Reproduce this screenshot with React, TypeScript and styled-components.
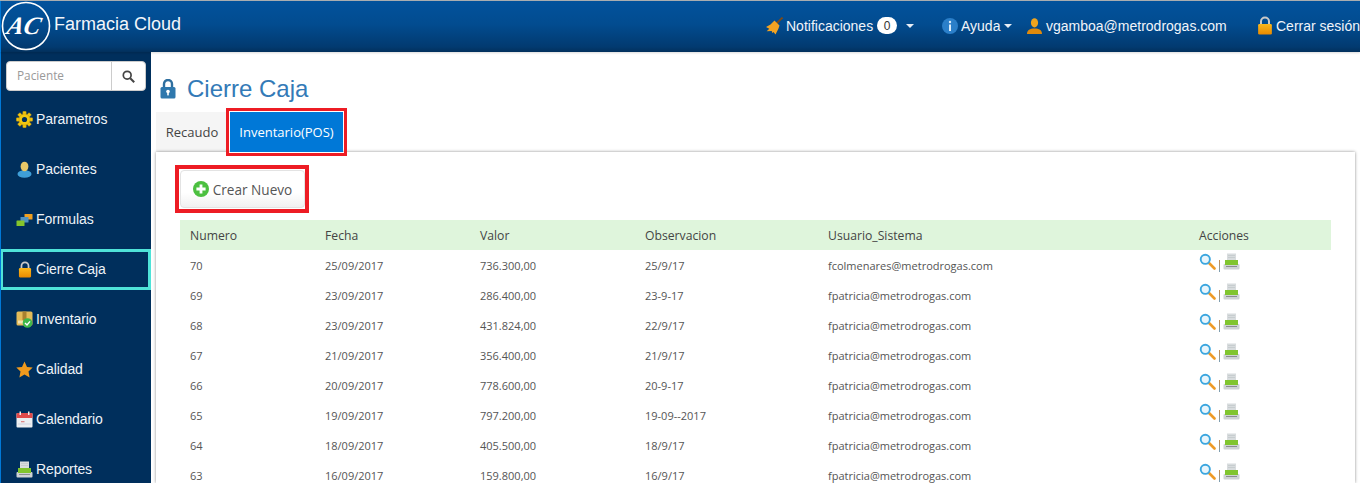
import React from "react";
import styled, { createGlobalStyle } from "styled-components";

const Global = createGlobalStyle`
  html, body { margin: 0; padding: 0; height: 483px; overflow: hidden; background: #fff; }
  body { font-family: "Liberation Sans", Arial, sans-serif; }
  * { box-sizing: border-box; }
`;

const Page = styled.div`
  width: 1360px; height: 483px; display: flex; flex-direction: column; overflow: hidden;
  border-top: 1px solid #a9adb0; 
`;
const Header = styled.header`
  height: 51px; flex: none; display: flex; align-items: center; justify-content: space-between;
  background: linear-gradient(180deg, #02529c 0%, #024c90 45%, #023a70 90%, #02305c 100%);
  box-shadow: 0 1px 2px rgba(0,0,0,.15); position: relative; z-index: 2; color: #fff;
  border-left: 1px solid #0078d7;
`;
const Brand = styled.div`
  display: flex; align-items: center; gap: 3px; padding: 0 0 0 0; height: 100%;
  font-size: 18px; margin-top: -2px;
`;
const BrandName = styled.span`position: relative; top: -1px; color: #f2f6fb;`;
const LogoText = styled.text`
  font-family: "Liberation Serif", serif; font-style: italic; font-weight: 700; font-size: 25px; fill: #fff;
`;
const NavMenu = styled.nav`display: flex; align-items: center; height: 100%; font-size: 14px; color: #f0f4fa; padding-bottom: 2px; margin-right: -2px;`;
const NavItem = styled.div<{ $w: number }>`
  display: flex; align-items: center; gap: 3px; width: ${p => p.$w}px; white-space: nowrap; flex: none;
`;
const Badge = styled.span`
  display: inline-flex; align-items: center; justify-content: center; width: 20px; height: 17px; border-radius: 9px;
  background: #fff; color: #333; font-size: 12px; margin: 0 5px 0 1px;
`;
const Caret = styled.span`
  display: inline-block; width: 0; height: 0; border-left: 4px solid transparent; border-right: 4px solid transparent;
  border-top: 4px solid #e8eef5; margin-left: 1px;
`;

const Body = styled.div`flex: 1; display: flex; min-height: 0;`;
const Sidebar = styled.aside`
  width: 151px; flex: none; background: #002f5c; border-left: 1px solid #0078d7; padding-top: 9px;
  display: flex; flex-direction: column; overflow: hidden;
`;
const SearchBox = styled.div`
  margin: 0 5px 0 5px; height: 30px; display: flex; background: #fff; border: 1px solid #ccc; border-radius: 4px; flex: none;
`;
const SearchLabel = styled.div`
  flex: 1; padding: 0 0 2px 10px; font-size: 11.8px; color: #999; display: flex; align-items: center;
  font-family: "Open Sans", sans-serif; border-right: 1px solid #ccc;
`;
const SearchBtn = styled.div`width: 33px; display: flex; align-items: center; justify-content: center; color: #444;`;
const SideList = styled.div`display: flex; flex-direction: column; margin-top: 3px; flex: none;`;
const SideItem = styled.div<{ $active?: boolean }>`
  height: 50px; flex: none; display: flex; align-items: center; gap: 3px; padding-left: 15px; font-size: 14px; color: #eef3f8;
  letter-spacing: -0.1px; position: relative;
  ${p => p.$active ? `&::after { content: ""; position: absolute; left: -1px; right: 0; top: 5px; bottom: 4px; border: 3px solid #4fe3d8; }` : ""}
`;
const IconSlot = styled.span`width: 17px; height: 17px; display: inline-flex; align-items: center; justify-content: center; flex: none;`;

const Main = styled.main`flex: 1; min-width: 0; padding: 0 5px 0 5px; display: flex; flex-direction: column; overflow: hidden;`;
const Title = styled.div`
  height: 60px; flex: none; display: flex; align-items: center; gap: 11px; padding: 13px 0 0 4px;
  font-size: 24px; color: #337ab7;
`;
const Tabs = styled.div`display: flex; height: 40px; flex: none; font-family: "Open Sans", sans-serif; font-size: 13px;`;
const Tab = styled.div<{ $active?: boolean }>`
  display: flex; align-items: center; justify-content: center; height: 40px; color: ${p => p.$active ? "#fff" : "#444"};
  background: ${p => p.$active ? "#0078d7" : "#f5f5f5"}; width: ${p => p.$active ? "113px" : "70px"};
  margin-left: ${p => p.$active ? "4px" : "0"}; padding-left: ${p => p.$active ? "0" : "2px"};
  ${p => p.$active ? "outline: 3px solid #ed1c24; outline-offset: 1px; position: relative; z-index: 1;" : ""}
`;
const Panel = styled.section`
  flex: 1; background: #fff; box-shadow: 0 0 3px rgba(0,0,0,.45); padding: 13px 24px 0 24px; min-height: 0;
`;
const ButtonFrame = styled.div`
  width: 134px; height: 48px; margin-left: -5px; border: 4px solid #ed1c24; padding: 1px 0 0 1px;
`;
const CreateButton = styled.div`
  width: 125px; height: 38px; display: flex; align-items: center; justify-content: center; gap: 4px;
  border: 1px solid #e3e3e3; border-radius: 4px; background: linear-gradient(#fff 60%, #f1f1f1);
  font-family: "Open Sans", sans-serif; font-size: 13.6px; color: #555;
`;
const Table = styled.table`
  width: 1151px; margin-top: 7px; border-collapse: collapse; table-layout: fixed;
  font-family: "Open Sans", sans-serif; font-size: 11px; color: #555;
`;
const HeadRow = styled.tr`background: #dff5dc; height: 30px;`;
const Th = styled.th<{ $w: number }>`
  width: ${p => p.$w}px; font-weight: 400; font-size: 12.2px; text-align: left; padding: 0 0 0 10px; color: #444;
`;
const Row = styled.tr`height: 30px;`;
const Td = styled.td`padding: 1px 0 0 10px; white-space: nowrap;`;
const Actions = styled.div`display: flex; align-items: flex-start; gap: 1px; height: 22px; margin-top: -4px;`;
const Sep = styled.span`width: 1px; height: 12px; background: linear-gradient(#c98b4a, #7aa0b8); margin: 7px 2px 0 2px;`;

const Gear = () => (
  <svg width="17" height="17" viewBox="0 0 17 17">
    <g fill="#f2c811" stroke="#b8890a" strokeWidth=".4">
      {[0, 45, 90, 135, 180, 225, 270, 315].map(a => <rect key={a} x="6.8" y="0.3" width="3.4" height="4" rx=".6" transform={`rotate(${a} 8.5 8.5)`} />)}
      <circle cx="8.5" cy="8.5" r="5.6" />
    </g>
    <circle cx="8.5" cy="8.5" r="2.6" fill="#002f5c" />
  </svg>
);
const Person = () => (
  <svg width="17" height="17" viewBox="0 0 17 17">
    <ellipse cx="8.5" cy="13" rx="7" ry="3.8" fill="#3f9fd8" />
    <ellipse cx="8.5" cy="5.5" rx="3.9" ry="4.8" fill="#e8c868" />
  </svg>
);
const Forms = () => (
  <svg width="17" height="17" viewBox="0 0 17 17">
    <rect x="8.5" y="3" width="8" height="5.6" rx=".6" fill="#f0a020" />
    <rect x="4.5" y="6" width="8" height="5.6" rx=".6" fill="#4f93c4" />
    <rect x="0.5" y="9.5" width="8" height="5.6" rx=".6" fill="#84c52c" />
  </svg>
);
const Lock = ({ c1 = "#fbb81c", c2 = "#e98a00", shackle = "#c9c9c9", w = 15, h = 18 }: { c1?: string; c2?: string; shackle?: string; w?: number; h?: number }) => (
  <svg width={w} height={h} viewBox="0 0 15 18">
    <defs><linearGradient id={`l${c1.slice(1)}`} x1="0" y1="0" x2="0" y2="1"><stop offset="0" stopColor={c1} /><stop offset="1" stopColor={c2} /></linearGradient></defs>
    <path d="M3.7 8V5.2a3.8 3.8 0 0 1 7.6 0V8" fill="none" stroke={shackle} strokeWidth="1.9" />
    <rect x="1" y="7.5" width="13" height="10" rx="1.2" fill={`url(#l${c1.slice(1)})`} />
  </svg>
);
const BlueLock = () => (
  <svg width="16" height="20" viewBox="0 0 16 20">
    <path d="M4 9V5a4 4 0 0 1 8 0V9" fill="none" stroke="#2f6f9f" strokeWidth="2.4" />
    <rect x="0.5" y="8" width="15" height="11.5" rx="1.5" fill="#2f78ad" />
    <circle cx="8" cy="12.5" r="1.8" fill="#fff" />
    <rect x="7.2" y="13" width="1.6" height="3.4" fill="#fff" />
  </svg>
);
const Box = () => (
  <svg width="17" height="17" viewBox="0 0 17 17">
    <rect x="0.5" y="0.5" width="16" height="14" rx="1.5" fill="#e3bb58" />
    <rect x="6.5" y="0.5" width="4" height="9" fill="#a9812f" />
    <rect x="2" y="9.5" width="5" height="3" fill="#f3e2b0" />
    <circle cx="11.5" cy="12" r="4.8" fill="#3fb84a" />
    <path d="M9 12l2 2 3-3.6" fill="none" stroke="#fff" strokeWidth="1.4" />
  </svg>
);
const Star = () => (
  <svg width="17" height="17" viewBox="0 0 17 17">
    <path d="M8.5.6l2.5 5.3 5.7.7-4.2 4 1.1 5.8-5.1-2.9-5.1 2.9 1.1-5.8-4.2-4 5.7-.7z" fill="#f09a1d" />
  </svg>
);
const Calendar = () => (
  <svg width="17" height="17" viewBox="0 0 17 17">
    <rect x="0.5" y="2" width="16" height="14.5" rx="1" fill="#eceff1" />
    <path d="M.5 3a1 1 0 0 1 1-1h14a1 1 0 0 1 1 1v4h-16z" fill="#e04a4a" />
    <rect x="3.5" y="0.5" width="1.5" height="3.5" fill="#eee" />
    <rect x="12" y="0.5" width="1.5" height="3.5" fill="#eee" />
    <rect x="5" y="10" width="3.5" height="1.3" fill="#d88" />
    <path d="M2 13h13" stroke="#ccd" strokeWidth=".8" />
  </svg>
);
const Printer = () => (
  <svg width="17" height="17" viewBox="0 0 17 17">
    <rect x="4" y="0.5" width="9" height="7" fill="#d8dcde" />
    <path d="M5 2.5h7M5 4.5h7" stroke="#c0c5c8" strokeWidth=".7" />
    <rect x="0.5" y="11" width="16" height="5.5" rx="1" fill="#ced2d4" />
    <rect x="2" y="7" width="13" height="5" fill="#80c52e" />
    <rect x="3" y="13" width="11" height="1" fill="#8a8e90" />
  </svg>
);
const Magnifier = () => (
  <svg width="17" height="17" viewBox="0 0 17 17">
    <path d="M9.5 9.5l6 6" stroke="#ee9a26" strokeWidth="2.6" strokeLinecap="round" />
    <circle cx="6.3" cy="6.3" r="4.6" fill="#e8f5fc" stroke="#3ba6df" strokeWidth="1.9" />
  </svg>
);
const Plus = () => (
  <svg width="16" height="16" viewBox="0 0 16 16">
    <circle cx="8" cy="8" r="8" fill="#4cc040" />
    <path d="M8 3.4v9.2M3.4 8h9.2" stroke="#fff" strokeWidth="2.8" />
  </svg>
);
const Broom = () => (
  <svg width="17" height="18" viewBox="0 0 17 18">
    <path d="M16.5 0.5L10.5 6.5" stroke="#7a4a1a" strokeWidth="1.8" />
    <path d="M8.5 3.5l5 5-1 3-3 6-2-2.5-1.2 1-.6-2-5 .2 2.6-2.4L0 10l4.5-2.5z" fill="#f2a322" />
  </svg>
);
const Info = () => (
  <svg width="16" height="16" viewBox="0 0 16 16">
    <circle cx="8" cy="8" r="8" fill="#2b7fc9" />
    <circle cx="8" cy="4" r="1.2" fill="#dcecfa" />
    <rect x="7" y="6.5" width="2" height="6.5" fill="#dcecfa" />
  </svg>
);
const User = () => (
  <svg width="17" height="16" viewBox="0 0 17 16">
    <ellipse cx="8.5" cy="4.8" rx="3.6" ry="4.6" fill="#f0a41e" />
    <path d="M1 16c0-4 3-5.5 7.5-5.5S16 12 16 16z" fill="#e08a0c" />
  </svg>
);
const SearchGlyph = () => (
  <svg width="13" height="13" viewBox="0 0 13 13">
    <circle cx="5.2" cy="5.2" r="3.9" fill="none" stroke="#444" strokeWidth="1.7" />
    <path d="M8.2 8.2l4 4" stroke="#444" strokeWidth="2" />
  </svg>
);
const Logo = () => (
  <svg width="50" height="50" viewBox="0 0 50 50">
    <circle cx="25" cy="25" r="23.5" fill="none" stroke="#fff" strokeWidth="1.6" />
    <g transform="skewX(-14) translate(8 0)">
      <LogoText x="5" y="33" textLength="33" lengthAdjust="spacingAndGlyphs">AC</LogoText>
    </g>
  </svg>
);

const menu: [string, React.ReactNode, boolean?][] = [
  ["Parametros", <Gear />],
  ["Pacientes", <Person />],
  ["Formulas", <Forms />],
  ["Cierre Caja", <Lock w={14} h={17} />, true],
  ["Inventario", <Box />],
  ["Calidad", <Star />],
  ["Calendario", <Calendar />],
  ["Reportes", <Printer />],
];

const rows = [
  ["70", "25/09/2017", "736.300,00", "25/9/17", "fcolmenares@metrodrogas.com"],
  ["69", "23/09/2017", "286.400,00", "23-9-17", "fpatricia@metrodrogas.com"],
  ["68", "23/09/2017", "431.824,00", "22/9/17", "fpatricia@metrodrogas.com"],
  ["67", "21/09/2017", "356.400,00", "21/9/17", "fpatricia@metrodrogas.com"],
  ["66", "20/09/2017", "778.600,00", "20-9-17", "fpatricia@metrodrogas.com"],
  ["65", "19/09/2017", "797.200,00", "19-09--2017", "fpatricia@metrodrogas.com"],
  ["64", "18/09/2017", "405.500,00", "18/9/17", "fpatricia@metrodrogas.com"],
  ["63", "16/09/2017", "159.800,00", "16/9/17", "fpatricia@metrodrogas.com"],
];

export default function App() {
  return (
    <Page>
      <Global />
      <Header>
        <Brand>
          <Logo />
          <BrandName>Farmacia Cloud</BrandName>
        </Brand>
        <NavMenu>
          <NavItem $w={176}><Broom />Notificaciones <Badge>0</Badge><Caret /></NavItem>
          <NavItem $w={84}><Info />Ayuda<Caret /></NavItem>
          <NavItem $w={231}><User />vgamboa@metrodrogas.com</NavItem>
          <NavItem $w={105}><Lock w={16} h={19} />Cerrar sesión</NavItem>
        </NavMenu>
      </Header>
      <Body>
        <Sidebar>
          <SearchBox>
            <SearchLabel>Paciente</SearchLabel>
            <SearchBtn><SearchGlyph /></SearchBtn>
          </SearchBox>
          <SideList>
            {menu.map(([label, icon, active]) => (
              <SideItem key={label} $active={active}><IconSlot>{icon}</IconSlot>{label}</SideItem>
            ))}
          </SideList>
        </Sidebar>
        <Main>
          <Title><BlueLock />Cierre Caja</Title>
          <Tabs>
            <Tab>Recaudo</Tab>
            <Tab $active>Inventario(POS)</Tab>
          </Tabs>
          <Panel>
            <ButtonFrame>
              <CreateButton><Plus />Crear Nuevo</CreateButton>
            </ButtonFrame>
            <Table>
              <thead>
                <HeadRow>
                  <Th $w={135}>Numero</Th>
                  <Th $w={155}>Fecha</Th>
                  <Th $w={165}>Valor</Th>
                  <Th $w={183}>Observacion</Th>
                  <Th $w={371}>Usuario_Sistema</Th>
                  <Th $w={142}>Acciones</Th>
                </HeadRow>
              </thead>
              <tbody>
                {rows.map(r => (
                  <Row key={r[0]}>
                    {r.map((c, i) => <Td key={i}>{c}</Td>)}
                    <Td>
                      <Actions><Magnifier /><Sep /><Printer /></Actions>
                    </Td>
                  </Row>
                ))}
              </tbody>
            </Table>
          </Panel>
        </Main>
      </Body>
    </Page>
  );
}
